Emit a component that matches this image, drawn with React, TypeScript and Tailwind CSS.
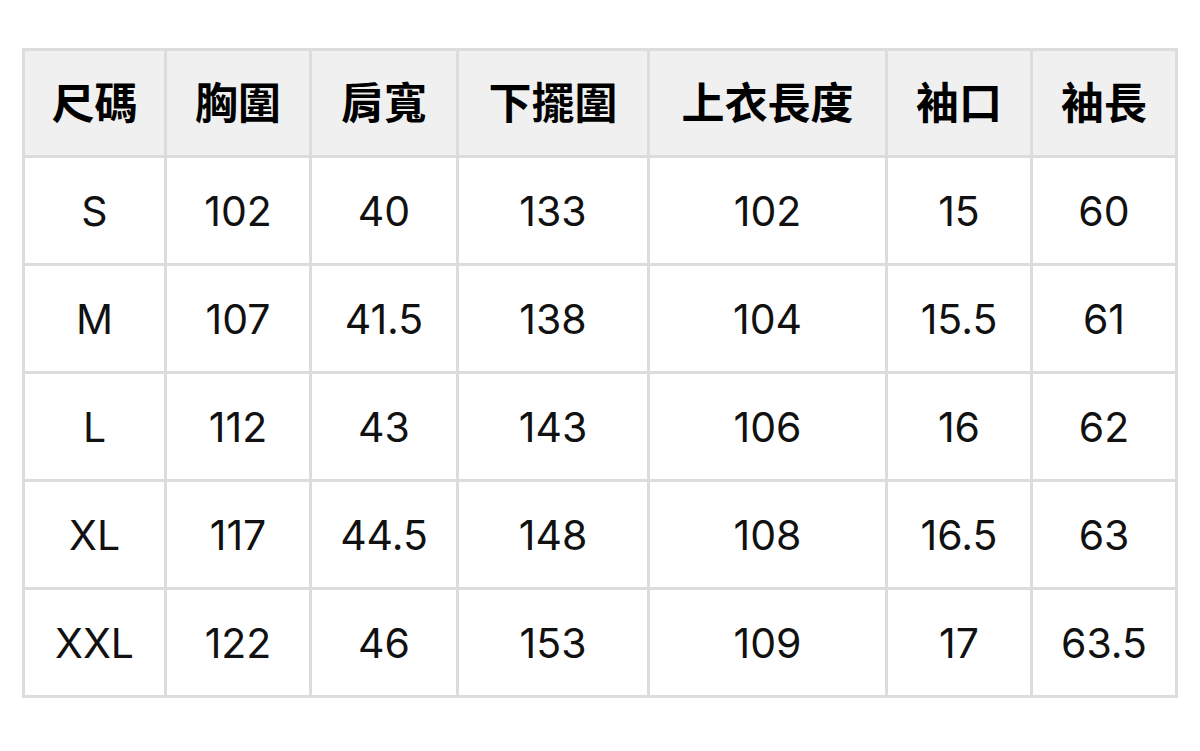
import React from "react";

const headers = ["尺碼", "胸圍", "肩寬", "下擺圍", "上衣長度", "袖口", "袖長"];
const rows = [
  ["S", "102", "40", "133", "102", "15", "60"],
  ["M", "107", "41.5", "138", "104", "15.5", "61"],
  ["L", "112", "43", "143", "106", "16", "62"],
  ["XL", "117", "44.5", "148", "108", "16.5", "63"],
  ["XXL", "122", "46", "153", "109", "17", "63.5"],
];

export default function App() {
  return (
    <div className="w-[1200px] h-[751px] bg-white pt-[48px] pl-[22px]">
      <div className="w-[1156px] grid grid-cols-[139px_142px_144px_188px_235px_142px_142px] grid-rows-[104px_105px_105px_105px_105px_105px] gap-[3px] p-[3px] bg-[#dcdcdc]">
        {headers.map((h) => (
          <div
            key={h}
            className="bg-[#f0f0f0] flex items-center justify-center text-[43px] font-bold text-black pb-[6px]"
            style={{ fontFamily: '"Noto Sans CJK TC", "Noto Sans CJK SC", sans-serif' }}
          >
            {h}
          </div>
        ))}
        {rows.flatMap((r, i) =>
          r.map((c, j) => (
            <div
              key={`${i}-${j}`}
              className="bg-white flex items-center justify-center text-[41px] text-[#111] font-['Inter',sans-serif] pt-[2px]"
            >
              {c}
            </div>
          ))
        )}
      </div>
    </div>
  );
}
